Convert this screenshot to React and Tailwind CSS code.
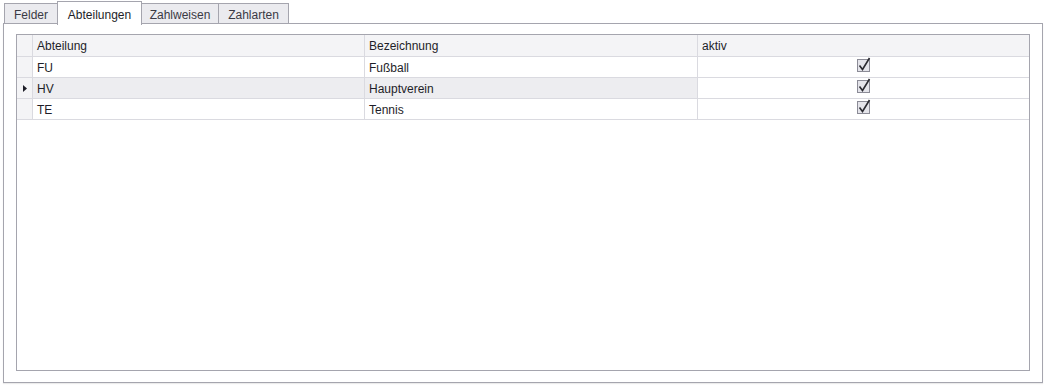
import React from "react";

const rows = [
  { code: "FU", name: "Fußball", active: true },
  { code: "HV", name: "Hauptverein", active: true, current: true },
  { code: "TE", name: "Tennis", active: true },
];

const tabs = [
  { label: "Felder", w: "w-[53px]" },
  { label: "Abteilungen", w: "w-[85px]" },
  { label: "Zahlweisen", w: "w-[77px]" },
  { label: "Zahlarten", w: "w-[70px]" },
];

function CheckBox() {
  return (
    <svg width="14" height="15" viewBox="0 0 14 15">
      <rect x="0.5" y="2.5" width="12" height="12" fill="#e4e4ea" stroke="#8b8b96" />
      <path d="M2.5 8.5 L5.5 12.5 L12.5 1" fill="none" stroke="#2a2a30" strokeWidth="1.6" />
    </svg>
  );
}

export default function App() {
  return (
    <div
      className="w-[1044px] h-[387px] bg-white text-[12px] text-[#1e1e28] overflow-hidden"
      style={{ fontFamily: '"Liberation Sans", Arial, sans-serif' }}
    >
      {/* Tabs */}
      <div className="flex items-end h-[24px] pl-[4px] relative z-10">
        {tabs.map((t, i) =>
          i === 1 ? (
            <div
              key={t.label}
              className={`${t.w} h-[24px] text-center pt-[4px] bg-white border border-b-0 border-[#a5a5ae] -mb-px`}
            >
              {t.label}
            </div>
          ) : (
            <div
              key={t.label}
              className={`${t.w} h-[21px] text-center pt-[2px] bg-[#ebebef] border border-[#a5a5ae] text-[#3a3a44] ${
                i === 0 ? "border-r-0" : "border-l-0"
              }`}
            >
              {t.label}
            </div>
          )
        )}
      </div>

      {/* Panel */}
      <div className="ml-[3px] -mt-px w-[1040px] h-[360px] border border-[#a5a5ae] pl-[12px] pt-[10px] shadow-[0_1px_1px_rgba(0,0,0,0.08)]">
        {/* Grid */}
        <div className="w-[1014px] h-[337px] border border-[#a5a5ae]">
          <div className="flex h-[22px] bg-[#f4f4f6] border-b border-[#dadae0]">
            <div className="w-[16px] border-r border-[#dadae0]" />
            <div className="w-[332px] border-r border-[#dadae0] pl-[4px] pt-[2px]">Abteilung</div>
            <div className="w-[333px] border-r border-[#dadae0] pl-[4px] pt-[2px]">Bezeichnung</div>
            <div className="flex-1 pl-[4px] pt-[2px]">aktiv</div>
          </div>
          {rows.map((r) => (
            <div
              key={r.code}
              className={`flex h-[21px] border-b border-[#dadae0] ${r.current ? "bg-[#ededf0]" : "bg-white"}`}
            >
              <div className="w-[16px] border-r border-[#dadae0] bg-[#f4f4f6] flex items-center justify-center">
                {r.current && (
                  <svg width="4" height="7" viewBox="0 0 4 7">
                    <path d="M0 0 L4 3.5 L0 7 Z" fill="#1e1e28" />
                  </svg>
                )}
              </div>
              <div className="w-[332px] border-r border-[#dadae0] pl-[4px] pt-[2px]">{r.code}</div>
              <div className="w-[333px] border-r border-[#dadae0] pl-[4px] pt-[2px]">{r.name}</div>
              <div className={`flex-1 flex justify-center items-start ${r.current ? "bg-white" : ""}`}>
                {r.active && <CheckBox />}
              </div>
            </div>
          ))}
        </div>
      </div>
    </div>
  );
}
